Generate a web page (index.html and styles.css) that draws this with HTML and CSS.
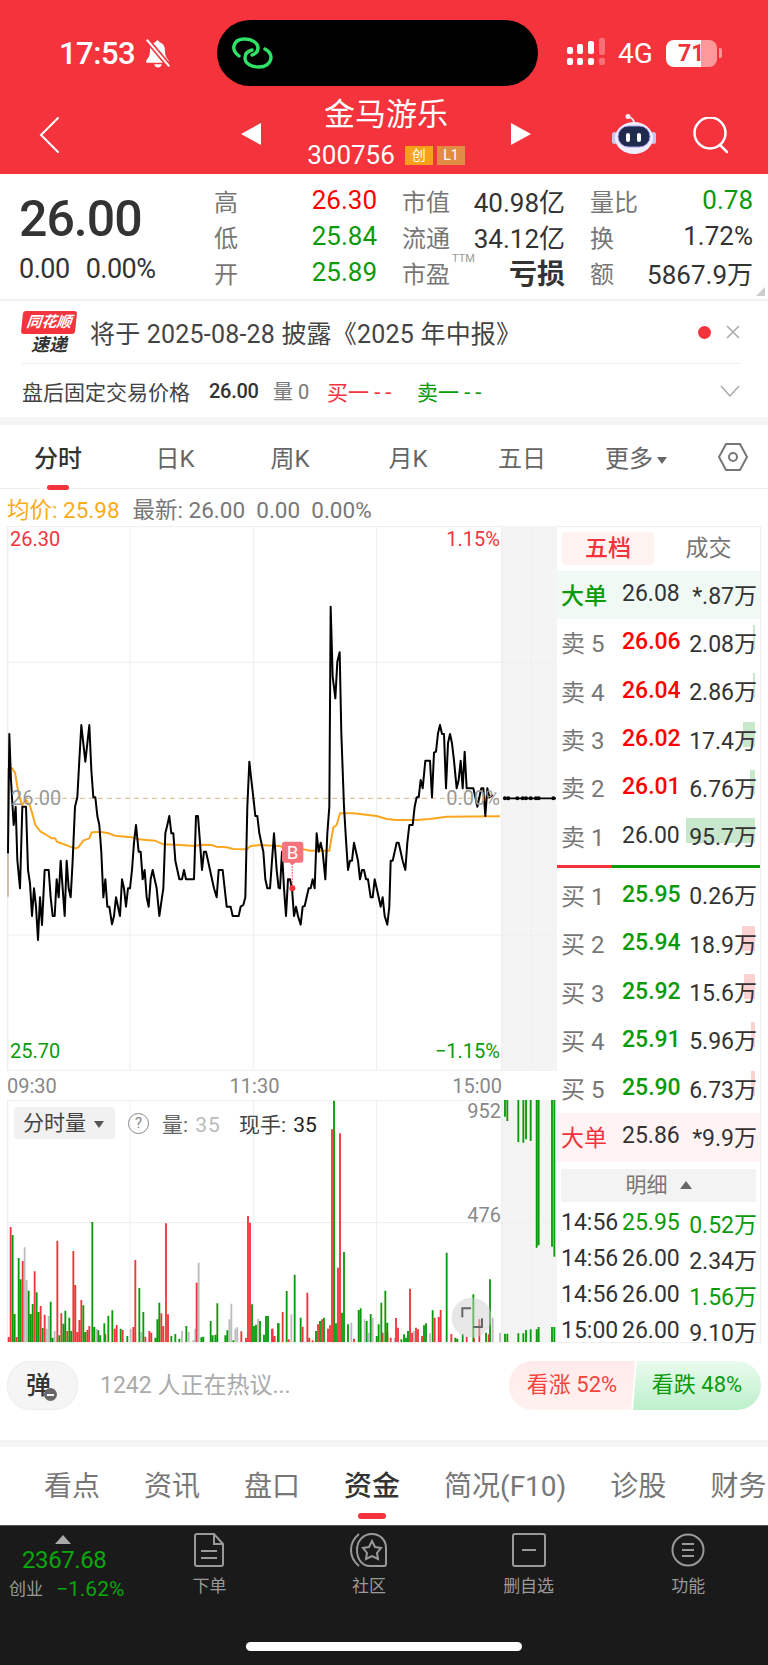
FILE: index.html
```html
<!DOCTYPE html>
<html lang="en">
<head>
  <meta charset="UTF-8">
  <title>金马游乐 300756</title>
  <link rel="stylesheet" href="styles.css">
</head>
<body>

<header class="top">
  <div class="status">
    <div class="status-left">
      <span class="clock">17:53</span>
      <svg class="bell" width="30" height="30" viewBox="0 0 28 28"><path d="M14 2c-1.500 0-2.300 1-2.400 2C8 5 6.500 8 6.500 12c0 4-1 6.500-3.500 9v2h21v-2c-2.500-2.500-3.500-5-3.500-9 0-4-1.500-7-5.100-8-.1-1-.9-2-2.400-2zM10.500 24.500c.5 2 1.800 3 3.500 3s3-1 3.500-3z" fill="#fff"/><path d="M4 2l21 25" stroke="#f4333c" stroke-width="5"/><path d="M3.500 1.500l21 25" stroke="#fff" stroke-width="2"/></svg>
    </div>
    <div class="island">
      <svg width="42" height="34" viewBox="0 0 42 34" fill="none" stroke="#2fe368" stroke-width="3.400" stroke-linecap="round"><path d="M7 19C3 16 1 13 2 9c1-5 6-7 11-7 7 0 13 4 13 9 0 4-3 6-6 7"/><path d="M33 12c4 2 6 6 6 9-1 6-6 9-12 9-7 0-14-3-14-9 0-4 3-7 7-8"/></svg>
    </div>
    <div class="status-right">
      <svg width="40" height="30" viewBox="0 0 40 30" fill="#fff"><rect x="0" y="9" width="6" height="7" rx="2"/><rect x="10" y="6" width="6" height="10" rx="2"/><rect x="21" y="3" width="6" height="13" rx="2"/><rect x="32" y="0" width="6" height="17" rx="2" opacity=".3"/><rect x="0" y="20" width="6" height="7" rx="2"/><rect x="10" y="20" width="6" height="7" rx="2"/><rect x="21" y="20" width="6" height="7" rx="2"/><rect x="32" y="20" width="6" height="7" rx="2" opacity=".3"/></svg>
      <span class="net">4G</span>
      <span class="battery">71</span>
      <span class="battery-nub"></span>
    </div>
  </div>
  <nav class="nav">
    <svg class="back" width="20" height="36" viewBox="0 0 20 36" fill="none" stroke="#fff" stroke-width="2" stroke-linecap="round"><path d="M19 1L2 18l17 17"/></svg>
    <div class="stock">
      <span class="arrow-left"></span>
      <div class="stock-name">
        <div class="stock-title">金马游乐</div>
        <div class="stock-code">300756 <span class="tag tag-chuang">创</span><span class="tag tag-l1">L1</span></div>
      </div>
      <span class="arrow-right"></span>
    </div>
    <div class="nav-icons">
      <svg width="44" height="42" viewBox="0 0 44 42"><circle cx="16" cy="3.500" r="2.500" fill="#f1efff"/><path d="M18 4.500c2 .5 3.500 2 4 5" fill="none" stroke="#f1efff" stroke-width="1.800"/><rect x="0" y="19" width="5" height="12" rx="2.500" fill="#c9c6ee"/><rect x="39" y="19" width="5" height="12" rx="2.500" fill="#c9c6ee"/><ellipse cx="22" cy="25" rx="19" ry="16" fill="#f1efff"/><rect x="6" y="13" width="32" height="21" rx="10.500" fill="#1f2a4d" stroke="#a99cf0"/><rect x="14" y="20" width="4" height="9" rx="2" fill="#fff"/><rect x="25" y="20" width="4" height="9" rx="2" fill="#fff"/></svg>
      <svg class="search" width="36" height="37" viewBox="0 0 36 37" fill="none" stroke="#fff" stroke-width="2.500" stroke-linecap="round"><circle cx="17" cy="16" r="15.500"/><path d="M27 28l7 7"/></svg>
    </div>
  </nav>
</header>

<section class="quote">
  <div class="quote-price">
    <div class="price-big">26.00</div>
    <div class="price-change"><span>0.00</span><span>0.00%</span></div>
  </div>
  <div class="quote-stats">
    <div class="stat"><span class="stat-name">高</span><span class="up">26.30</span></div>
    <div class="stat"><span class="stat-name">市值</span><span>40.98亿</span></div>
    <div class="stat"><span class="stat-name">量比</span><span class="down">0.78</span></div>
    <div class="stat"><span class="stat-name">低</span><span class="down">25.84</span></div>
    <div class="stat"><span class="stat-name">流通</span><span>34.12亿</span></div>
    <div class="stat"><span class="stat-name">换</span><span>1.72%</span></div>
    <div class="stat"><span class="stat-name">开</span><span class="down">25.89</span></div>
    <div class="stat"><span class="stat-name">市盈<sup class="ttm">TTM</sup></span><span class="loss">亏损</span></div>
    <div class="stat"><span class="stat-name">额</span><span>5867.9万</span></div>
  </div>
  <span class="corner"></span>
</section>

<section class="notice">
  <div class="notice-top">
    <div class="flash">
      <div class="flash-brand"><span>同花顺</span></div>
      <div class="flash-text">速递</div>
    </div>
    <div class="notice-text">将于 2025-08-28 披露《2025 年中报》</div>
    <span class="notice-dot"></span>
    <svg width="14" height="14" viewBox="0 0 14 14" stroke="#aaa" stroke-width="1.600"><path d="M1 1l12 12M13 1L1 13"/></svg>
  </div>
  <div class="notice-bottom">
    <span class="after-name">盘后固定交易价格</span>
    <span class="after-price">26.00</span>
    <span class="after-vol">量 0</span>
    <span class="after-buy">买一 <b class="dashes">--</b></span>
    <span class="after-sell">卖一 <b class="dashes">--</b></span>
    <svg class="after-more" width="20" height="12" viewBox="0 0 20 12" fill="none" stroke="#aaa" stroke-width="1.500"><path d="M1 1l9 10 9-10"/></svg>
  </div>
</section>

<section class="periods">
  <span class="period period-on">分时</span>
  <span class="period">日K</span>
  <span class="period">周K</span>
  <span class="period">月K</span>
  <span class="period">五日</span>
  <span class="period">更多<i class="caret"></i></span>
  <svg class="period-set" width="30" height="28" viewBox="0 0 30 28" fill="none" stroke="#777" stroke-width="2"><path d="M8 1h14l7 13-7 13H8L1 14z"/><circle cx="15" cy="14" r="4"/></svg>
</section>

<div class="legend"><span class="avg">均价: 25.98</span><span>最新: 26.00&nbsp; 0.00&nbsp; 0.00%</span></div>

<main class="board">
  <div class="charts">
    <div class="pane-price">
      <svg class="plot" width="550" height="545" viewBox="21 18 1650 1635" fill="none">
        <rect x="1506" y="18" width="165" height="1635" fill="#f4f4f4"/>
        <path d="M22 20H1505M22 427H1505M22 1245H1505M22 1651H1505M1130 20V1652M760 20V1652M390 20V1652M1505 20V1652" stroke="#eee" stroke-width="3"/>
        <path d="M22 20V1652" stroke="#eee" stroke-width="6"/>
        <path d="M1506 427H1671M1506 1245H1671M1593 20V1652" stroke="#e2e2e2" stroke-width="3" stroke-dasharray="3 9"/>
        <path d="M24 835H1500" stroke="#dcb687" stroke-width="3" stroke-dasharray="15 12"/>
        <path d="M24 1130V745" stroke="#a08a62" stroke-width="3"/>

        <!-- average price -->
        <polyline stroke="#fba61f" stroke-width="6" points="30,745 36,745 45,758 52,800 58,830 66,855 78,840 90,858 98,885 106,915 122,935 140,945 155,955 165,955 172,966 190,972 210,980 225,985 235,982 250,962 268,955 275,937 300,935 325,940 345,947 395,952 415,958 465,962 490,973 540,975 585,978 600,974 635,975 650,980 680,982 700,987 740,988 752,978 780,975 840,978"/>
        <polyline transform="translate(810 0)" stroke="#fba61f" stroke-width="6" points="30,978 35,980 100,988 120,992 178,992 190,922 200,915 210,880 250,880 320,888 350,897 380,900 440,900 480,897 530,890 690,889"/>

        <!-- last price, morning then afternoon -->
        <polyline stroke="#000" stroke-width="6" stroke-linejoin="round" points="24,1000 28,642 33,780 41,915 47,860 52,1020 60,1105 67,860 78,860 84,1050 90,1090 96,1188 102,1105 108,1160 114,1260 120,1132 126,1215 134,1050 146,1050 152,1132 158,1188 164,1188 170,1078 176,1132 182,1022 188,1105 194,1188 200,1022 206,1105 212,1132 218,1022 225,860 232,832 238,720 244,615 250,670 256,725 262,670 268,615 274,750 280,832 286,832 292,888 298,915 304,998 310,1132 316,1078 322,1160 328,1160 336,1213 342,1188 348,1132 354,1160 360,1188 366,1078 372,1105 378,1160 384,1105 390,1105 396,1050 402,968 408,915 416,995 422,995 428,1078 434,1050 440,1132 446,1160 452,1078 458,1050 464,1078 470,1105 478,1188 486,1132 490,1105 496,940 502,915 508,888 514,940 520,940 526,1022 532,1050 538,1078 546,1078 552,1050 558,1078 582,1078 588,888 594,888 600,968 606,1050 612,995 618,995 624,1022 630,1050 636,1078 642,1105 650,1132 656,1050 668,1050 674,1105 680,1160 692,1160 698,1188 716,1188 722,1160 730,1155 736,1132 742,860 748,725 754,780 760,832 766,888 772,888 778,940 784,968 790,995 796,1078 802,1105 810,1105 816,1022 822,940 830,1050 836,1105"/>
        <polyline transform="translate(810 0)" stroke="#000" stroke-width="6" stroke-linejoin="round" points="26,1105 30,1105 36,995 42,1105 48,1188 54,1078 60,1078 66,1105 72,1188 78,1160 84,1188 92,1214 98,1160 104,1158 116,1105 122,1105 128,1078 134,1105 140,940 146,995 152,968 158,995 166,1078 172,940 178,860 182,260 188,470 196,535 202,425 209,397 214,640 222,860 228,960 234,1050 240,1022 246,1022 252,968 258,995 264,1022 270,1078 276,1050 282,1050 288,1078 294,1078 302,1132 308,1132 314,1078 320,1105 326,1132 332,1160 338,1132 344,1188 352,1214 358,1160 362,1022 368,1022 374,995 380,968 386,968 392,995 398,1022 406,1050 412,968 418,915 428,915 434,860 440,832 446,832 452,780 458,805 466,722 480,722 486,832 492,698 498,695 504,640 510,615 516,642 522,642 528,805 534,670 540,642 546,670 552,722 560,805 566,780 572,722 578,805 584,695 590,805 610,805 616,832 622,860 628,832 634,805 640,805 646,888 652,805 658,832 668,825"/>
        <path transform="translate(810 0)" d="M700 835H858" stroke="#000" stroke-width="5"/>

        <!-- closing auction ticks -->
        <g transform="translate(810 0)" fill="#000"><circle cx="705" cy="835" r="6"/><circle cx="715" cy="835" r="6"/><circle cx="742" cy="835" r="6"/><circle cx="758" cy="835" r="6"/><circle cx="768" cy="835" r="6"/><circle cx="782" cy="835" r="6"/><circle cx="798" cy="835" r="6"/><circle cx="806" cy="835" r="6"/><circle cx="850" cy="835" r="6"/></g>

        <!-- trade marker -->
        <g transform="translate(810 0)"><path d="M67 1030V1105" stroke="#f4586a" stroke-width="4" stroke-dasharray="4 5"/><circle cx="67" cy="1105" r="9" fill="#f4333c"/><path d="M44 965h48q8 0 8 8v47q0 8-8 8H76l-9 8-9-8H44q-8 0-8-8v-47q0-8 8-8z" fill="#f5737b"/><text x="68" y="1016" text-anchor="middle" font-size="56" fill="#fff" font-family="Roboto, sans-serif">B</text></g>
      </svg>
      <span class="axis-label axis-top-left">26.30</span>
      <span class="axis-label axis-top-right">1.15%</span>
      <span class="axis-label axis-mid-left">26.00</span>
      <span class="axis-label axis-mid-right">0.00%</span>
      <span class="axis-label axis-low-left">25.70</span>
      <span class="axis-label axis-low-right">−1.15%</span>
    </div>

    <div class="times"><span>09:30</span><span>11:30</span><span>15:00</span></div>

    <div class="pane-vol">
      <svg class="plot" width="550" height="243" viewBox="21 122 1650 729" fill="none">
        <rect x="1506" y="122" width="165" height="729" fill="#f4f4f4"/>
        <path d="M22 124H1505M22 490H1505M22 850H1505M390 122V850M760 122V850M1130 122V850M1505 122V850" stroke="#eee" stroke-width="3"/>
        <path d="M22 122V850" stroke="#eee" stroke-width="6"/>
        <path d="M1506 490H1671M1593 122V850" stroke="#e2e2e2" stroke-width="3" stroke-dasharray="3 9"/>

        <g stroke-width="5.500">
          <path stroke="#bdbdbd" d="M74 564V848M80 662V848M140 808V848M146 770V848M164 815V848M290 808V848M392 808V848M424 818V848M546 815V848M566 817V848M580 842V848M586 808V848M596 610V848M688 780V848M694 733V848M706 808V848M712 804V848M774 778V848"/>
          <path stroke="#f4333c" d="M26 833V848M32 503V848M50 833V848M68 605V848M104 636V848M122 740V848M134 766V848M172 544V848M184 762V848M202 815V848M220 575V848M226 677V848M232 818V848M238 782V848M244 722V848M262 812V848M268 800V848M316 824V848M344 808V848M350 797V848M368 812V848M400 803V848M406 602V848M436 832V848M448 815V848M454 820V848M484 762V848M490 800V848M498 492V848M504 765V848M590 670V848M724 816V848M738 835V848M744 470V848M750 490V848M816 808V848M822 835V848"/>
          <path stroke="#0a9a0a" d="M38 527V848M44 764V848M56 596V848M62 660V848M86 694V848M92 764V848M98 734V848M110 699V848M116 758V848M128 806V848M152 727V848M158 835V848M178 828V848M190 793V848M196 754V848M208 775V848M214 815V848M250 738V848M256 818V848M277 488V848M283 803V848M295 813V848M301 828V848M313 792V848M325 769V848M337 753V848M362 808V848M382 830V848M418 686V848M430 758V848M466 835V848M472 780V848M478 730V848M514 830V848M526 824V848M538 838V848M559 800V848M604 834V848M610 832V848M632 785V848M638 828V848M646 826V848M652 732V848M676 828V848M682 813V848M700 843V848M756 735V848M762 800V848M768 796V848M780 785V848M792 826V848M798 770V848M804 770V848M834 792V848"/>
        </g>
        <g stroke-width="5.500" transform="translate(810 0)">
          <path stroke="#bdbdbd" d="M64 765V848M244 790V848M284 780V848M296 820V848M308 775V848M374 835V848M432 815V848M480 822V848M668 775V848M690 820V848"/>
          <path stroke="#f4333c" d="M8 808V848M14 830V848M38 758V848M56 840V848M98 802V848M112 700V848M118 835V848M128 843V848M144 795V848M156 780V848M174 808V848M180 798V848M186 210V848M204 625V848M210 222V848M252 838V848M338 820V848M352 818V848M362 835V848M378 776V848M384 805V848M420 688V848M426 820V848M438 805V848M444 810V848M456 830V848M494 775V848M506 773V848M512 752V848M544 824V848M590 832V848M612 835V848M628 780V848M656 825V848"/>
          <path stroke="#0a9a0a" d="M26 792V848M50 695V848M74 646V848M92 775V848M138 815V848M150 785V848M162 775V848M192 124V848M198 792V848M216 760V848M222 578V848M234 795V848M266 752V848M272 747V848M290 785V848M302 764V848M320 830V848M326 795V848M334 730V848M346 694V848M352 790V848M394 840V848M402 825V848M408 835V848M414 815V848M462 798V848M468 792V848M488 753V848M530 580V848M556 835V848M562 838V848M578 824V848M610 705V848M648 820V848M660 660V848"/>
          <path stroke="#0a9a0a" d="M705 122V172M712 122V185M745 122V248M760 122V250M768 122V240M782 122V245M800 122V565M806 122V558M846 122V562M853 122V592M705 823V848M712 823V848M745 822V848M760 822V848M768 812V848M782 810V848M800 810V848M806 803V848M846 803V848M853 803V848"/>
          <!-- fullscreen button -->
          <circle cx="605" cy="775" r="60" fill="#cfcfcf" fill-opacity=".5"/>
          <path d="M577 774V747H603M636 777V803H610" stroke="#666" stroke-width="6"/>
        </g>
      </svg>
      <div class="vol-head">
        <span class="vol-pick">分时量<i class="caret caret-dark"></i></span>
        <span class="vol-help">?</span>
        <span class="vol-key">量: <b>35</b></span>
        <span class="vol-now">现手: <em>35</em></span>
      </div>
      <span class="axis-label vol-top">952</span>
      <span class="axis-label vol-mid">476</span>
    </div>
  </div>

  <aside class="book">
    <div class="book-tabs"><span class="book-tab book-tab-on">五档</span><span class="book-tab">成交</span></div>

    <div class="row row-big-sell"><span class="down">大单</span><span class="dark">26.08</span><span class="qty">*.87万</span></div>
    <div class="row"><span class="side">卖 5</span><span class="up">26.06</span><span class="qty"><i class="depth depth-sell" style="width:2px"></i>2.08万</span></div>
    <div class="row"><span class="side">卖 4</span><span class="up">26.04</span><span class="qty"><i class="depth depth-sell" style="width:2px"></i>2.86万</span></div>
    <div class="row"><span class="side">卖 3</span><span class="up">26.02</span><span class="qty"><i class="depth depth-sell" style="width:12px"></i>17.4万</span></div>
    <div class="row"><span class="side">卖 2</span><span class="up">26.01</span><span class="qty"><i class="depth depth-sell" style="width:5px"></i>6.76万</span></div>
    <div class="row"><span class="side">卖 1</span><span class="dark">26.00</span><span class="qty"><i class="depth depth-sell" style="width:69px"></i>95.7万</span></div>

    <div class="split"><i class="split-red"></i><i class="split-green"></i></div>

    <div class="row"><span class="side">买 1</span><span class="down">25.95</span><span class="qty">0.26万</span></div>
    <div class="row"><span class="side">买 2</span><span class="down">25.94</span><span class="qty"><i class="depth depth-buy" style="width:13px"></i>18.9万</span></div>
    <div class="row"><span class="side">买 3</span><span class="down">25.92</span><span class="qty"><i class="depth depth-buy" style="width:11px"></i>15.6万</span></div>
    <div class="row"><span class="side">买 4</span><span class="down">25.91</span><span class="qty"><i class="depth depth-buy" style="width:4px"></i>5.96万</span></div>
    <div class="row"><span class="side">买 5</span><span class="down">25.90</span><span class="qty"><i class="depth depth-buy" style="width:4px"></i>6.73万</span></div>
    <div class="row row-big-buy"><span class="up-soft">大单</span><span class="dark">25.86</span><span class="qty">*9.9万</span></div>

    <div class="detail-bar">明细<i class="caret-up"></i></div>
    <div class="tick"><span>14:56</span><span class="down">25.95</span><span class="qty down">0.52万</span></div>
    <div class="tick"><span>14:56</span><span>26.00</span><span class="qty">2.34万</span></div>
    <div class="tick"><span>14:56</span><span>26.00</span><span class="qty down">1.56万</span></div>
    <div class="tick"><span>15:00</span><span>26.00</span><span class="qty">9.10万</span></div>
  </aside>
</main>

<section class="talk">
  <div class="talk-btn">弹<i class="talk-off"></i></div>
  <div class="talk-hint">1242 人正在热议...</div>
  <div class="vote">
    <span class="vote-up">看涨 52%</span>
    <span class="vote-down">看跌 48%</span>
  </div>
</section>

<section class="sections">
  <span>看点</span>
  <span>资讯</span>
  <span>盘口</span>
  <span class="section-on">资金</span>
  <span>简况(F10)</span>
  <span>诊股</span>
  <span>财务</span>
</section>

<footer class="dock">
  <div class="index">
    <i class="index-caret"></i>
    <div class="index-value">2367.68</div>
    <div class="index-line"><span class="index-name">创业</span><span class="index-pct">−1.62%</span></div>
  </div>
  <div class="dock-item">
    <svg width="32" height="34" viewBox="0 0 32 34" fill="none" stroke="#999" stroke-width="2"><path d="M4 1h17l9 10v20q0 2-2 2H4q-2 0-2-2V3q0-2 2-2zM21 1v10h9M8 18h16M8 25h16"/></svg>
    <span>下单</span>
  </div>
  <div class="dock-item">
    <svg width="38" height="34" viewBox="0 0 38 34" fill="none" stroke="#999" stroke-width="2"><path d="M9 1C3 6 1 11 1 17c0 7 3 12 8 16"/><path d="M22 1c8 0 14 6 14 14v16q0 2-2 2H20C12 33 7 26 7 17 7 8 13 1 22 1z"/><path d="M22 8l3 6 6 1-4 5 1 6-6-3-6 3 1-6-4-5 6-1z"/></svg>
    <span>社区</span>
  </div>
  <div class="dock-item">
    <svg width="34" height="34" viewBox="0 0 34 34" fill="none" stroke="#999" stroke-width="2"><rect x="1" y="1" width="32" height="32" rx="2"/><path d="M10 17h14"/></svg>
    <span>删自选</span>
  </div>
  <div class="dock-item">
    <svg width="34" height="34" viewBox="0 0 34 34" fill="none" stroke="#999" stroke-width="2"><circle cx="17" cy="17" r="15.500"/><path d="M11 11h12M11 17h12M11 23h12"/></svg>
    <span>功能</span>
  </div>
  <span class="home-bar"></span>
</footer>

</body>
</html>
```

FILE: styles.css
```css
html, body { margin: 0; padding: 0; }
body { width: 768px; height: 1665px; overflow: hidden; background: #fff; color: #333; font-family: Roboto, "Noto Sans CJK SC", sans-serif; }
i { font-style: normal; display: block; }

.up { color: #f00; }
.up-soft { color: #f4333c; }
.down { color: #0a9a0a; }
.dark { color: #333; }

/* red header */
.top { height: 174px; background: #f4333c; color: #fff; }
.status { height: 86px; padding-top: 20px; box-sizing: border-box; display: flex; }
.status-left { width: 217px; padding-left: 59px; box-sizing: border-box; display: flex; align-items: center; gap: 8px; }
.clock { font-size: 31px; font-weight: 500; letter-spacing: -0.5px; }
.island { width: 321px; height: 66px; background: #000; border-radius: 33px; padding: 17px 0 0 15px; box-sizing: border-box; }
.status-right { display: flex; align-items: center; margin-left: 29px; }
.net { font-size: 28px; margin-left: 11px; }
.battery { width: 51px; height: 27px; margin-left: 13px; border-radius: 8px; background: linear-gradient(90deg, #fff 35px, #f99 35px); color: #f4333c; font-size: 23px; font-weight: 700; line-height: 27px; text-align: center; }
.battery-nub { width: 3px; height: 10px; margin-left: 2px; background: #f99; border-radius: 0 2px 2px 0; }

.nav { height: 88px; display: grid; grid-template-columns: 241px 290px 1fr; }
.back { margin: 31px 0 0 39px; }
.stock { display: flex; justify-content: space-between; align-items: flex-start; height: 88px; }
.arrow-left { margin-top: 37px; border: 11px solid transparent; border-left: 0; border-right: 20px solid #fff; }
.arrow-right { margin-top: 37px; border: 11px solid transparent; border-right: 0; border-left: 20px solid #fff; }
.stock-name { text-align: center; margin-top: 12px; }
.stock-title { font-size: 31px; line-height: 34px; }
.stock-code { font-size: 26px; line-height: 30px; margin-top: 8px; display: flex; align-items: center; gap: 4px; }
.tag { width: 28px; height: 19px; font-size: 14px; line-height: 19px; text-align: center; }
.tag-chuang { background: #f9a01b; margin-left: 6px; }
.tag-l1 { background: #e08c45; }
.nav-icons { display: flex; align-items: flex-start; gap: 37px; padding: 27px 0 0 81px; }
.search { margin-top: 4px; }

/* quote summary */
.quote { position: relative; height: 127px; box-sizing: border-box; padding-top: 8px; display: flex; border-bottom: 2px solid #efefef; }
.quote-price { width: 214px; padding-left: 19px; box-sizing: border-box; }
.price-big { font-size: 50px; font-weight: 500; line-height: 54px; letter-spacing: -1px; margin-top: 10px; }
.price-change { font-size: 27px; line-height: 30px; margin-top: 8px; display: flex; gap: 16px; letter-spacing: -0.5px; }
.quote-stats { display: grid; grid-template-columns: repeat(3, 163px); grid-auto-rows: 36px; column-gap: 25px; }
.stat { display: flex; justify-content: space-between; align-items: center; font-size: 26px; }
.stat-name { font-size: 24px; color: #777; position: relative; }
.ttm { position: absolute; left: 50px; top: -3px; font-size: 11px; color: #999; line-height: 14px; }
.loss { font-weight: 700; font-size: 28px; }
.corner { position: absolute; right: 3px; bottom: 3px; width: 9px; height: 9px; background: #ccc; clip-path: polygon(100% 0, 100% 100%, 0 100%); }

/* announcement */
.notice { height: 116px; }
.notice-top { height: 63px; margin: 0 28px 0 22px; border-bottom: 1px solid #eee; display: flex; align-items: center; box-sizing: border-box; }
.flash { width: 54px; margin-top: 2px; }
.flash-brand { background: #f4333c; border-radius: 3px; transform: skewX(-6deg); height: 23px; color: #fff; text-align: center; font-size: 15px; font-weight: 700; line-height: 23px; font-style: italic; }
.flash-text { font-size: 18px; line-height: 22px; font-weight: 700; font-style: italic; text-align: center; color: #333; }
.notice-text { font-size: 25px; letter-spacing: .2px; color: #444; margin-left: 14px; flex: 1; white-space: nowrap; }
.notice-dot { width: 13px; height: 13px; border-radius: 50%; background: #f4333c; margin-right: 15px; }
.notice-bottom { height: 53px; padding-left: 22px; display: flex; align-items: center; font-size: 21px; position: relative; }
.after-name { width: 187px; color: #444; }
.after-price { font-weight: 500; font-size: 20px; width: 64px; letter-spacing: -0.3px; }
.after-vol { width: 54px; color: #777; font-size: 20px; }
.after-buy { width: 90px; color: #f4333c; white-space: nowrap; }
.after-sell { color: #0a9a0a; white-space: nowrap; }
.dashes { font-weight: 400; letter-spacing: 5px; font-size: 22px; }
.after-more { margin-left: auto; margin-right: 28px; }

/* period tabs */
.periods { position: relative; height: 72px; box-sizing: border-box; border-top: 8px solid #f5f5f5; border-bottom: 1px solid #eee; }
.period { position: absolute; top: 14px; width: 100px; text-align: center; font-size: 24px; color: #666; }
.period:nth-child(1) { left: 8px; color: #333; font-weight: 500; }
.period:nth-child(2) { left: 125px; }
.period:nth-child(3) { left: 240px; }
.period:nth-child(4) { left: 358px; }
.period:nth-child(5) { left: 472px; }
.period:nth-child(6) { left: 586px; }
.period-on::after { content: ""; position: absolute; left: 39px; top: 46px; width: 22px; height: 5px; border-radius: 3px; background: #f4333c; }
.caret { display: inline-block; margin-left: 4px; vertical-align: 3px; border: 5px solid transparent; border-bottom: 0; border-top: 7px solid #666; }
.period-set { position: absolute; left: 718px; top: 18px; }

.legend { height: 37px; padding-left: 7px; display: flex; align-items: center; gap: 13px; font-size: 22.500px; color: #777; white-space: nowrap; }
.avg { color: #f9ab1a; }

/* chart and order book */
.board { height: 817px; display: flex; }
.charts { width: 557px; padding-left: 7px; box-sizing: border-box; }
.pane-price, .pane-vol { position: relative; }
.pane-price { height: 545px; }
.pane-vol { height: 243px; }
.plot { display: block; }
.axis-label { position: absolute; font-size: 20px; line-height: 24px; }
.axis-top-left { left: 3px; top: 1px; color: #f4333c; }
.axis-top-right { right: 57px; top: 1px; color: #f4333c; }
.axis-mid-left { left: 4px; top: 260px; color: #999; }
.axis-mid-right { right: 57px; top: 260px; color: #999; }
.axis-low-left { left: 3px; top: 513px; color: #0a9a0a; }
.axis-low-right { right: 57px; top: 513px; color: #0a9a0a; }
.times { height: 29px; width: 495px; display: flex; justify-content: space-between; align-items: center; font-size: 20px; color: #888; }
.vol-top { right: 56px; top: -1px; color: #888; }
.vol-mid { right: 56px; top: 103px; color: #888; }
.vol-head { position: absolute; left: 7px; top: 7px; display: flex; align-items: center; font-size: 21px; color: #666; white-space: nowrap; }
.vol-pick { width: 101px; height: 32px; box-sizing: border-box; padding-left: 9px; border-radius: 3px; background: #f1f1f1; color: #444; line-height: 32px; white-space: nowrap; }
.caret-dark { margin-left: 8px; vertical-align: 2px; border-top-color: #555; }
.vol-help { width: 19px; height: 19px; margin-left: 13px; border: 1.500px solid #888; border-radius: 50%; color: #888; font-size: 15px; line-height: 19px; text-align: center; }
.vol-key { margin-left: 13px; }
.vol-key b { font-weight: 400; color: #bbb; letter-spacing: 1px; margin-left: 2px; }
.vol-now { margin-left: 18px; color: #444; }
.vol-now em { font-style: normal; color: #222; margin-left: 2px; }

.book { width: 204px; height: 817px; box-sizing: border-box; border-top: 1px solid #eee; border-right: 1px solid #eee; border-bottom: 1px solid #eee; }
.book-tabs { height: 44px; padding: 5px 5px 0; box-sizing: border-box; display: flex; }
.book-tab { flex: 1; height: 33px; line-height: 33px; text-align: center; font-size: 23px; color: #777; }
.book-tab-on { flex: none; width: 92px; background: #fff3f2; border-radius: 4px; color: #f4333c; font-weight: 500; margin-right: 8px; }
.row, .tick { display: grid; grid-template-columns: 61px 1fr auto; align-items: center; padding: 0 3px 3px 4px; box-sizing: border-box; font-size: 23px; white-space: nowrap; }
.row { height: 48.300px; }
.tick { height: 36px; color: #333; }
.row-big-sell { background: #f0f9f3; }
.row-big-buy { background: #fff4f3; }
.side { font-size: 24px; color: #777; }
.qty { position: relative; text-align: right; color: #333; z-index: 0; }
.qty.down { color: #0a9a0a; }
.row span.up, .row span.down { font-weight: 500; }
.depth { position: absolute; right: 2px; top: 0; z-index: -1; height: 25px; }
.depth-sell { background: #c9e7cc; }
.depth-buy { background: #fbd2d2; }
.split { height: 11px; padding-top: 4px; box-sizing: border-box; display: flex; }
.split-red { width: 55px; height: 3px; background: #f4333c; }
.split-green { flex: 1; height: 3px; background: #0a9a0a; }
.detail-bar { height: 33px; margin: 7px 4px 4px; background: #f3f3f3; color: #777; font-size: 21px; line-height: 33px; text-align: center; }
.caret-up { display: inline-block; margin-left: 12px; vertical-align: 3px; border: 6px solid transparent; border-top: 0; border-bottom: 8px solid #666; }

/* comment strip */
.talk { height: 97px; padding-top: 18px; box-sizing: border-box; display: flex; align-items: flex-start; }
.talk-btn { position: relative; width: 71px; height: 49px; margin-left: 7px; border-radius: 24px; background: #f5f5f5; box-shadow: inset 0 0 0 1px #eee; font-size: 25px; font-weight: 500; line-height: 49px; padding-left: 19px; box-sizing: border-box; color: #333; }
.talk-off { position: absolute; left: 37px; top: 27px; width: 13px; height: 13px; border-radius: 50%; background: #666; }
.talk-off::after { content: ""; position: absolute; left: 3px; top: 5.500px; width: 7px; height: 2px; background: #fff; }
.talk-hint { margin-left: 22px; width: 410px; font-size: 23px; line-height: 49px; color: #aaa; white-space: nowrap; }
.vote { display: flex; width: 252px; height: 49px; margin-left: -1px; border-radius: 24px; overflow: hidden; font-size: 22px; line-height: 47px; text-align: center; white-space: nowrap; }
.vote-up { width: 126px; background: linear-gradient(#ffeaea, #fff2f0); color: #f4433c; clip-path: polygon(0 0, 100% 0, 97% 100%, 0 100%); }
.vote-down { width: 128px; margin-left: -2px; background: linear-gradient(#e9fbee, #bdf0cb); color: #0a9a0a; clip-path: polygon(3% 0, 100% 0, 100% 100%, 0 100%); }

/* section tabs */
.sections { position: relative; height: 85px; box-sizing: border-box; border-top: 7px solid #f5f5f5; padding: 20px 0 0 44px; display: flex; gap: 44px; font-size: 28px; line-height: 40px; color: #777; white-space: nowrap; overflow: hidden; }
.section-on { position: relative; color: #333; font-weight: 500; }
.section-on::after { content: ""; position: absolute; left: 14px; top: 46px; width: 28px; height: 6px; border-radius: 3px; background: #f4333c; }

/* bottom dock */
.dock { position: relative; height: 140px; background: #1a1a1a; display: flex; border-top: 1px solid #555; box-sizing: border-box; }
.index { width: 130px; box-sizing: border-box; padding: 9px 0 0 9px; }
.index-caret { width: 0; margin-left: 46px; border: 8px solid transparent; border-top: 0; border-bottom: 9px solid #aaa; }
.index-value { margin: 2px 0 0 13px; font-size: 24px; line-height: 28px; color: #0aa70a; letter-spacing: -0.4px; }
.index-line { display: flex; gap: 13px; margin-top: 3px; font-size: 21px; line-height: 24px; }
.index-name { color: #999; font-size: 17px; }
.index-pct { color: #0aa70a; }
.dock-item { width: 160px; padding-top: 7px; display: flex; flex-direction: column; align-items: center; gap: 5px; font-size: 17px; color: #999; }
.home-bar { position: absolute; left: 246px; top: 116px; width: 276px; height: 9px; border-radius: 5px; background: #fff; }
```
